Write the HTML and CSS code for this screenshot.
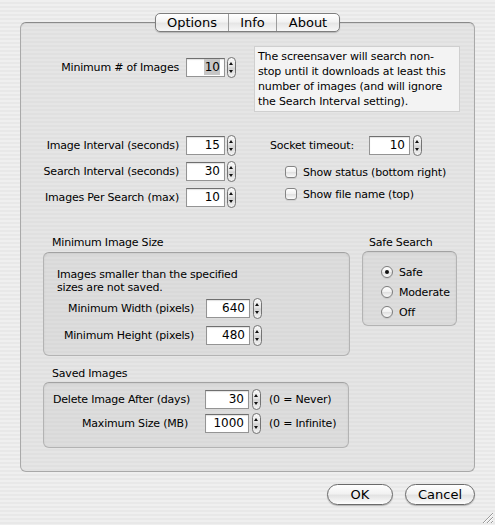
FILE: index.html
```html
<!DOCTYPE html>
<html>
<head>
<meta charset="utf-8">
<link rel="stylesheet" href="styles.css">
</head>
<body>
<div class="window">
  <div class="tabbar">
    <div class="tabs">
      <span class="tab tab-options">Options</span>
      <span class="tab tab-info">Info</span>
      <span class="tab tab-about">About</span>
    </div>
  </div>
  <div class="panel">
    <div class="top">
      <div class="top-left">
        <div class="field">
          <span class="lbl">Minimum # of Images</span>
          <span class="num"><span class="sel">10</span></span>
          <span class="spin"></span>
        </div>
      </div>
      <div class="info">The screensaver will search non-<br>stop until it downloads at least this<br>number of images (and will ignore<br>the Search Interval setting).</div>
    </div>
    <div class="mid">
      <div class="mid-left">
        <div class="field"><span class="lbl">Image Interval (seconds)</span><span class="num">15</span><span class="spin"></span></div>
        <div class="field"><span class="lbl">Search Interval (seconds)</span><span class="num">30</span><span class="spin"></span></div>
        <div class="field"><span class="lbl">Images Per Search (max)</span><span class="num">10</span><span class="spin"></span></div>
      </div>
      <div class="mid-right">
        <div class="field socket"><span class="lbl socket-lbl">Socket timeout:</span><span class="num num-socket">10</span><span class="spin"></span></div>
        <div class="check-row first"><span class="checkbox"></span><span>Show status (bottom right)</span></div>
        <div class="check-row"><span class="checkbox"></span><span>Show file name (top)</span></div>
      </div>
    </div>
    <div class="groups">
      <div class="gcol-left">
        <div class="gtitle">Minimum Image Size</div>
        <div class="gbox box-size">
          <div class="size-text">Images smaller than the specified<br>sizes are not saved.</div>
          <div class="field size-row"><span class="lbl">Minimum Width (pixels)</span><span class="num num-wide">640</span><span class="spin"></span></div>
          <div class="field size-row second"><span class="lbl">Minimum Height (pixels)</span><span class="num num-wide">480</span><span class="spin"></span></div>
        </div>
        <div class="gtitle saved-title">Saved Images</div>
        <div class="gbox box-saved">
          <div class="saved-row"><span class="lbl saved-lbl">Delete Image After (days)</span><span class="num num-wide">30</span><span class="spin"></span><span class="note">(0 = Never)</span></div>
          <div class="saved-row second"><span class="lbl saved-lbl">Maximum Size (MB)</span><span class="num num-wide">1000</span><span class="spin"></span><span class="note">(0 = Infinite)</span></div>
        </div>
      </div>
      <div class="gcol-right">
        <div class="gtitle">Safe Search</div>
        <div class="gbox box-safe">
          <div class="radio-row"><span class="radio on"></span><span>Safe</span></div>
          <div class="radio-row"><span class="radio"></span><span>Moderate</span></div>
          <div class="radio-row"><span class="radio"></span><span>Off</span></div>
        </div>
      </div>
    </div>
  </div>
  <div class="buttons">
    <span class="btn btn-ok">OK</span>
    <span class="btn btn-cancel">Cancel</span>
  </div>
  <svg class="grip" width="14" height="14" viewBox="0 0 14 14">
    <path d="M13 3 L3 13 M13 7 L7 13 M13 11 L11 13" stroke="#9a9a9a" stroke-width="1"/>
    <path d="M13 4 L4 13 M13 8 L8 13 M13 12 L12 13" stroke="#ffffff" stroke-width="1"/>
  </svg>
</div>
</body>
</html>
```
FILE: styles.css
```css
html, body {
  margin: 0;
  padding: 0;
}

.window {
  position: relative;
  width: 495px;
  height: 525px;
  box-sizing: border-box;
  padding-top: 13px;
  overflow: hidden;
  background: repeating-linear-gradient(to bottom, #efefef 0 2px, #e8e8e8 2px 4px);
  font-family: "DejaVu Sans", sans-serif;
  font-size: 11px;
  letter-spacing: -0.2px;
  color: #000;
}

/* tabs */
.tabbar {
  position: relative;
  z-index: 1;
  display: flex;
  justify-content: center;
  height: 19px;
}

.tabs {
  display: flex;
  height: 19px;
  box-sizing: border-box;
  border: 1px solid #7e7e7e;
  border-radius: 5px;
  overflow: hidden;
  background: linear-gradient(to bottom, #ffffff 0%, #f3f3f3 45%, #e6e6e6 55%, #f7f7f7 100%);
  box-shadow: 0 1px 1px rgba(0, 0, 0, 0.2);
}

.tab {
  display: block;
  text-align: center;
  font-size: 13px;
  line-height: 17px;
  letter-spacing: 0;
}

.tab + .tab {
  border-left: 1px solid #9c9c9c;
}

.tab-options { width: 72px; }
.tab-info { width: 47px; }
.tab-about { width: 62px; }

/* panel */
.panel {
  margin: -10px 20px 0;
  height: 450px;
  box-sizing: border-box;
  border: 1px solid #a9a9a9;
  border-top-color: #8a8a8a;
  border-radius: 6px;
  background: repeating-linear-gradient(to bottom, #e5e5e5 0 2px, #e0e0e0 2px 4px);
  box-shadow: inset 0 1px 1px rgba(0, 0, 0, 0.08);
}

.top {
  display: flex;
  padding-top: 23px;
}

.top-left {
  width: 233px;
  box-sizing: border-box;
  padding-top: 12px;
  padding-right: 18px;
  display: flex;
  justify-content: flex-end;
  align-items: flex-start;
}

.field {
  display: flex;
  align-items: center;
  justify-content: flex-end;
  height: 19px;
}

.lbl {
  white-space: nowrap;
}

.num {
  display: block;
  width: 39px;
  height: 19px;
  box-sizing: border-box;
  margin-left: 7px;
  padding-right: 4px;
  border: 1px solid #949494;
  border-top-color: #6f6f6f;
  background: #fff;
  box-shadow: inset 0 1px 1px rgba(0, 0, 0, 0.12);
  text-align: right;
  line-height: 17px;
  font-size: 12px;
  letter-spacing: 0;
}

.sel {
  background: #c6c6c6;
  padding: 1px 0 1px 1px;
}

.spin {
  position: relative;
  display: block;
  width: 9px;
  height: 21px;
  box-sizing: border-box;
  margin-left: 2px;
  border: 1px solid #747474;
  border-radius: 5px;
  background: linear-gradient(to bottom, #fafafa 0%, #e2e2e2 48%, #d2d2d2 52%, #f4f4f4 100%);
}

.spin::before,
.spin::after {
  content: "";
  position: absolute;
  left: 1px;
  width: 0;
  height: 0;
  border-left: 2.5px solid transparent;
  border-right: 2.5px solid transparent;
}

.spin::before {
  top: 4px;
  border-bottom: 3px solid #111;
}

.spin::after {
  bottom: 4px;
  border-top: 3px solid #111;
}

.info {
  width: 206px;
  height: 66px;
  box-sizing: border-box;
  border: 1px solid #cfcfcf;
  background: #f3f3f3;
  padding: 2px 0 0 3px;
  line-height: 15px;
  white-space: nowrap;
  letter-spacing: -0.15px;
}

/* middle */
.mid {
  display: flex;
  margin-top: 24px;
}

.mid-left {
  width: 233px;
  box-sizing: border-box;
  padding-right: 18px;
  display: flex;
  flex-direction: column;
  gap: 7px;
}

.mid-right {
  padding-left: 16px;
}

.socket {
  justify-content: flex-start;
}

.socket-lbl {
  width: 99px;
}

.num-socket {
  width: 41px;
  margin-left: 0;
}

.socket .spin {
  margin-left: 3px;
}

.check-row {
  display: flex;
  align-items: center;
  height: 14px;
  padding-left: 15px;
  margin-top: 8px;
}

.check-row.first {
  margin-top: 10px;
}

.checkbox {
  display: block;
  width: 12px;
  height: 12px;
  box-sizing: border-box;
  margin-right: 6px;
  border: 1px solid #858585;
  border-radius: 3px;
  background: linear-gradient(to bottom, #ffffff 0%, #f0f0f0 50%, #e2e2e2 55%, #fbfbfb 100%);
  box-shadow: 0 1px 0 rgba(0, 0, 0, 0.08);
}

/* groups */
.groups {
  display: flex;
  margin-top: 29px;
  padding-left: 22px;
}

.gcol-left {
  width: 307px;
}

.gcol-right {
  width: 95px;
  margin-left: 12px;
}

.gtitle {
  line-height: 13px;
  padding-left: 9px;
  margin-bottom: 3px;
}

.gcol-right .gtitle {
  padding-left: 7px;
  margin-bottom: 2px;
}

.gbox {
  box-sizing: border-box;
  border: 1px solid #b3b3b3;
  border-top-color: #a2a2a2;
  border-radius: 6px;
  background: repeating-linear-gradient(to bottom, #dddddd 0 2px, #d9d9d9 2px 4px);
  box-shadow: inset 0 1px 2px rgba(0, 0, 0, 0.08);
}

.box-size {
  height: 104px;
  padding: 15px 0 0 13px;
}

.size-text {
  line-height: 13px;
  white-space: nowrap;
}

.size-row {
  margin-top: 5px;
  padding-right: 87px;
}

.size-row.second {
  margin-top: 8px;
}

.num-wide {
  width: 44px;
  margin-left: 12px;
}

.size-row .spin,
.saved-row .spin {
  margin-left: 3px;
}

.saved-title {
  margin-top: 11px;
  margin-bottom: 2px;
}

.box-saved {
  width: 306px;
  height: 66px;
  padding: 7px 0 0 9px;
}

.saved-row {
  display: flex;
  align-items: center;
  height: 19px;
}

.saved-row.second {
  margin-top: 5px;
}

.saved-lbl {
  width: 135px;
  text-align: right;
}

.saved-row .num-wide {
  margin-left: 17px;
}

.note {
  margin-left: 8px;
  white-space: nowrap;
}

.box-safe {
  height: 75px;
  padding: 13px 0 0 18px;
}

.radio-row {
  display: flex;
  align-items: center;
  height: 14px;
  margin-bottom: 6px;
}

.radio {
  position: relative;
  display: block;
  width: 12px;
  height: 12px;
  box-sizing: border-box;
  margin-right: 6px;
  border: 1px solid #7c7c7c;
  border-radius: 50%;
  background: linear-gradient(to bottom, #ffffff 0%, #f0f0f0 50%, #e0e0e0 55%, #fafafa 100%);
  box-shadow: 0 1px 0 rgba(0, 0, 0, 0.08);
}

.radio.on::after {
  content: "";
  position: absolute;
  left: 3px;
  top: 3px;
  width: 4px;
  height: 4px;
  border-radius: 50%;
  background: #111;
}

/* buttons */
.buttons {
  display: flex;
  justify-content: flex-end;
  gap: 12px;
  margin-top: 12px;
  padding-right: 20px;
}

.btn {
  display: block;
  height: 21px;
  box-sizing: border-box;
  border: 1px solid #6a6a6a;
  border-radius: 11px;
  background: linear-gradient(to bottom, #ffffff 0%, #f2f2f2 45%, #e3e3e3 55%, #fdfdfd 100%);
  box-shadow: 0 1px 1px rgba(0, 0, 0, 0.25);
  text-align: center;
  font-size: 13px;
  line-height: 19px;
  letter-spacing: 0;
}

.btn-ok { width: 66px; }
.btn-cancel { width: 70px; }

.grip {
  position: absolute;
  right: 1px;
  bottom: 1px;
}
```
